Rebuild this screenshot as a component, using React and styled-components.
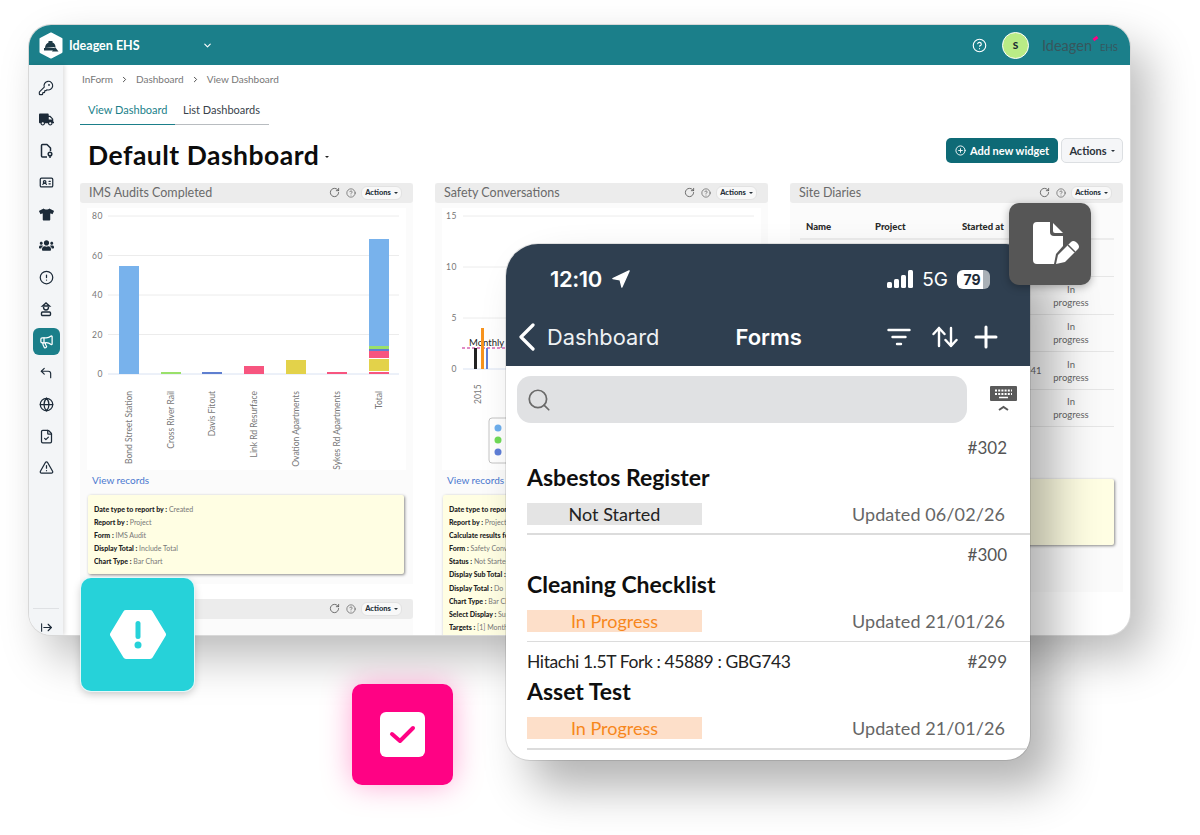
import React from 'react';
import styled, { createGlobalStyle } from 'styled-components';
import { KeyRound, IdCard, CircleAlert, Megaphone, CornerUpLeft, Globe, FileCheck, TriangleAlert, ArrowRightFromLine, RotateCw, CircleHelp, CirclePlus, ChevronDown, Search, ChevronRight } from 'lucide-react';
import { FaTruck, FaTshirt, FaUsers } from 'react-icons/fa';

const uiFont = `"Lato", "Noto Sans", sans-serif`;

const GlobalStyle = createGlobalStyle`
  html, body { margin: 0; padding: 0; background: #fff; }
  body { font-family: ${uiFont}; }
`;

const Page = styled.div`
  position: relative;
  width: 1200px;
  height: 835px;
  overflow: hidden;
  background: #fff;
  padding: 25px 0 0 29px;
  box-sizing: border-box;
`;

const Window = styled.div`
  width: 1101px;
  height: 610px;
  border-radius: 22px;
  background: #fff;
  box-shadow: 0 0 0 1px #d8d8d8, 18px 22px 46px rgba(0, 0, 0, 0.27);
  overflow: hidden;
  display: flex;
  flex-direction: column;
`;

const TopBar = styled.div`
  height: 40px;
  flex: none;
  background: #1b7f8a;
  display: flex;
  align-items: center;
  padding: 0 14px 0 10px;
  color: #fff;
`;

const Brand = styled.span`
  font-size: 12.5px;
  font-weight: 700;
  margin-left: 6px;
  width: 133px;
`;

const TopRight = styled.div`
  margin-left: auto;
  display: flex;
  align-items: center;
`;

const Avatar = styled.div`
  width: 25px;
  height: 25px;
  border-radius: 50%;
  background: #b9ec86;
  border: 1px solid #fff;
  margin: 0 13px 0 15px;
  color: #1b2b33;
  font-size: 10px;
  font-weight: 900;
  display: flex;
  align-items: center;
  justify-content: center;
`;

const VendorMark = styled.span`
  position: relative;
  color: #37565c;
  font-size: 14.5px;
  width: 74px;
  white-space: nowrap;
  small {
    font-size: 9.5px;
    margin-left: 8px;
  }
  i {
    position: absolute;
    left: 51px;
    top: 0;
    width: 5px;
    height: 3px;
    background: #ff0284;
    transform: rotate(-35deg);
  }
`;

const Body = styled.div`
  flex: 1;
  min-height: 0;
  display: flex;
`;

const Sidebar = styled.div`
  width: 34px;
  flex: none;
  background: #f3f5f7;
  box-shadow: 2px 0 4px rgba(0, 0, 0, 0.12);
  display: flex;
  flex-direction: column;
  align-items: center;
  padding-top: 9px;
  box-sizing: border-box;
  z-index: 1;
`;

const NavItem = styled.div`
  width: 27px;
  height: 27px;
  margin-bottom: 4.7px;
  flex: none;
  display: flex;
  align-items: center;
  justify-content: center;
  border-radius: 6px;
  color: ${(p) => (p.$active ? '#fff' : '#1c2a38')};
  background: ${(p) => (p.$active ? '#1b7f8a' : 'transparent')};
`;

const SideFoot = styled.div`
  margin-top: auto;
  width: 26px;
  height: 27px;
  box-sizing: border-box;
  padding-top: 12px;
  border-top: 1px solid #dfe1e4;
  display: flex;
  align-items: flex-start;
  justify-content: center;
  color: #1c2a38;
`;

const Main = styled.div`
  flex: 1;
  min-width: 0;
  padding: 7px 7px 0 17px;
  overflow: hidden;
`;

const Crumbs = styled.div`
  height: 14px;
  display: flex;
  align-items: center;
  font-size: 10px;
  color: #777;
  padding-left: 2px;
  svg {
    margin: 0 7px;
    color: #444;
  }
`;

const Tabs = styled.div`
  margin-top: 14px;
  height: 24px;
  width: 189px;
  display: flex;
  border-bottom: 1px solid #b8bcc0;
`;

const Tab = styled.div`
  font-size: 11px;
  padding: 3px 8px 0;
  width: ${(p) => (p.$active ? '95px' : 'auto')};
  box-sizing: border-box;
  white-space: nowrap;
  color: ${(p) => (p.$active ? '#1b7f8a' : '#39424b')};
  ${(p) => p.$active && 'border-bottom: 1px solid #1b7f8a; margin-bottom: -1px;'}
`;

const HeadRow = styled.div`
  margin-top: 7px;
  height: 51px;
  display: flex;
  align-items: flex-start;
`;

const Title = styled.h1`
  margin: 8px 0 0 8px;
  font-size: 26.5px;
  line-height: 30px;
  font-weight: 700;
  color: #0c0c0c;
  letter-spacing: 0.5px;
`;

const TitleCaret = styled.span`
  width: 0;
  height: 0;
  margin: 24px 0 0 6px;
  border: 2.5px solid transparent;
  border-top-color: #222;
`;

const PrimaryButton = styled.div`
  margin: 6px 0 0 auto;
  width: 112px;
  height: 25px;
  border-radius: 5px;
  background: #0e6a76;
  color: #fff;
  font-size: 11px;
  font-weight: 700;
  display: flex;
  align-items: center;
  justify-content: center;
  gap: 4px;
`;

const GhostButton = styled.div`
  margin: 6px 0 0 3px;
  width: 62px;
  height: 25px;
  box-sizing: border-box;
  border-radius: 5px;
  background: #f5f6f8;
  border: 1px solid #dcdfe2;
  color: #2b333b;
  font-size: 11px;
  font-weight: 700;
  display: flex;
  align-items: center;
  justify-content: center;
  gap: 4px;
`;

const Caret = styled.span`
  width: 0;
  height: 0;
  margin-top: 3px;
  border: 2.5px solid transparent;
  border-top-color: currentColor;
`;

const Columns = styled.div`
  display: grid;
  grid-template-columns: repeat(3, 333px);
  column-gap: 22px;
  align-items: start;
`;

const Column = styled.div`
  display: flex;
  flex-direction: column;
  gap: 15px;
`;

const Widget = styled.div`
  background: #fbfbfb;
`;

const WidgetHead = styled.div`
  height: 20px;
  box-sizing: border-box;
  background: #ececec;
  border-radius: 3px;
  display: flex;
  align-items: center;
  padding: 0 11px 1px 9px;
  font-size: 12.5px;
  color: #6a6a6a;
  svg {
    color: #555;
  }
`;

const WidgetTools = styled.div`
  margin-left: auto;
  display: flex;
  align-items: center;
  gap: 6px;
`;

const MiniActions = styled.div`
  height: 14px;
  width: 41px;
  box-sizing: border-box;
  margin-left: -1px;
  border-radius: 6px;
  border: 1px solid #e2e2e2;
  background: #f8f8f8;
  color: #263038;
  font-size: 7.5px;
  font-weight: 900;
  display: flex;
  align-items: center;
  justify-content: center;
  gap: 3px;
`;

const ChartPanel = styled.div`
  margin: 5px 7px 0;
  height: 262px;
  background: #fff;
  svg {
    display: block;
    font-family: ${uiFont};
  }
`;

const RecordsLink = styled.div`
  margin: 3px 0 0 12px;
  height: 14px;
  font-size: 10px;
  line-height: 14px;
  color: #4a78d0;
`;

const Note = styled.div`
  margin: ${(p) => p.$top || '8px'} 9px 0 8px;
  height: ${(p) => p.$height || 'auto'};
  padding: 8px 0 6px 6px;
  box-sizing: border-box;
  background: #fffee3;
  border-radius: 2px;
  box-shadow: 1px 1px 3px rgba(0, 0, 0, 0.45);
`;

const NoteRow = styled.div`
  font-size: 7px;
  height: 13.1px;
  line-height: 13.1px;
  color: #777;
  white-space: nowrap;
  overflow: hidden;
  b {
    color: #222;
    font-weight: 900;
  }
`;

const WidgetFoot = styled.div`
  height: ${(p) => p.$height};
`;

const DiaryHead = styled.div`
  margin: 5px 9px 0 10px;
  height: 32px;
  display: grid;
  grid-template-columns: 69px 87px 1fr;
  align-items: center;
  padding: 7px 0 0 6px;
  box-sizing: border-box;
  border-bottom: 2px solid #ececec;
  font-size: 9.5px;
  font-weight: 900;
  color: #2a2a2a;
`;

const DiaryRow = styled.div`
  margin: 0 9px 0 10px;
  height: 37.4px;
  box-sizing: border-box;
  background: #fafafa;
  border-bottom: 1px solid #e6e6e6;
  display: grid;
  grid-template-columns: 69px 87px 91px 1fr;
  align-items: center;
  padding-left: 6px;
  font-size: 9.5px;
  color: #666;
`;

const DiaryStatus = styled.div`
  width: 40px;
  margin: 1px 0 0 -2px;
  text-align: center;
  line-height: 13px;
`;

const Tile = styled.div`
  position: absolute;
  left: ${(p) => p.$x}px;
  top: ${(p) => p.$y}px;
  width: ${(p) => p.$size}px;
  height: ${(p) => p.$size}px;
  box-sizing: border-box;
  border-radius: 10px;
  background: ${(p) => p.$bg};
  box-shadow: ${(p) => p.$shadow};
  display: flex;
  align-items: center;
  justify-content: center;
  z-index: 5;
`;

const Phone = styled.div`
  position: absolute;
  left: 506px;
  top: 244px;
  width: 524px;
  height: 516px;
  background: #fff;
  border-radius: 32px 24px 24px 24px;
  overflow: hidden;
  box-shadow: 0 0 0 1px rgba(0, 0, 0, 0.1), 24px 28px 46px rgba(0, 0, 0, 0.3);
  z-index: 3;
  display: flex;
  flex-direction: column;
`;

const PhoneHeader = styled.div`
  height: 122px;
  flex: none;
  background: #2f3f50;
  color: #fff;
  font-family: "Inter", "Liberation Sans", sans-serif;
`;

const StatusBar = styled.div`
  height: 70px;
  box-sizing: border-box;
  padding: 0 40px 0 44px;
  display: flex;
  align-items: center;
`;

const Clock = styled.span`
  font-size: 22px;
  font-weight: 600;
  letter-spacing: -0.4px;
  margin-right: 10px;
`;

const Network = styled.span`
  font-size: 19px;
  font-weight: 400;
  margin: 0 9px 0 8px;
`;

const Battery = styled.span`
  width: 33px;
  height: 19px;
  border-radius: 6px;
  background: linear-gradient(90deg, #fff 0 80%, #a9b0b6 80%);
  color: #1e2b38;
  font-size: 14px;
  font-weight: 700;
  display: flex;
  align-items: center;
  justify-content: center;
  padding-right: 3px;
  box-sizing: border-box;
`;

const NavBar = styled.div`
  position: relative;
  height: 46px;
  display: flex;
  align-items: center;
  padding: 0 32px 0 12px;
  font-size: 21.8px;
`;

const BackLabel = styled.span`
  margin-left: 11px;
  font-weight: 400;
  color: #eef1f3;
`;

const NavTitle = styled.span`
  margin-left: 76px;
  font-size: 22px;
  font-weight: 600;
`;

const NavIcons = styled.div`
  margin-left: auto;
  display: flex;
  align-items: center;
  gap: 16px;
  > svg:first-child {
    margin-right: 5px;
  }
`;

const SearchRow = styled.div`
  flex: none;
  display: flex;
  align-items: flex-start;
  padding: 10px 12px 0 11px;
  height: 68px;
  box-sizing: border-box;
`;

const SearchBox = styled.div`
  width: 450px;
  height: 47px;
  border-radius: 14px;
  background: #e0e1e3;
  display: flex;
  align-items: center;
  padding-left: 9px;
  box-sizing: border-box;
  color: #6a6a6a;
`;

const KeyboardButton = styled.div`
  margin: 10px 0 0 23px;
`;

const FormRow = styled.div`
  margin: 0 0 6px 21px;
  height: 101.2px;
  box-sizing: border-box;
  border-bottom: ${(p) => (p.$thick ? '2px' : '1px')} solid #dcdcdc;
  padding-right: 23px;
`;

const RowTop = styled.div`
  height: 26px;
  display: flex;
  align-items: center;
  justify-content: space-between;
  font-size: 17.5px;
  letter-spacing: -0.4px;
  color: #222;
`;

const RowNumber = styled.span`
  font-size: 17px;
  letter-spacing: 0;
  color: #555;
`;

const RowName = styled.div`
  height: 34px;
  line-height: 34px;
  font-size: 23px;
  font-weight: 700;
  color: #0f0f0f;
`;

const RowBottom = styled.div`
  margin-top: 9px;
  display: flex;
  align-items: center;
  justify-content: space-between;
`;

const StatusBadge = styled.div`
  width: 175px;
  height: 22px;
  background: ${(p) => (p.$tone === 'orange' ? '#fddfc9' : '#e4e4e4')};
  color: ${(p) => (p.$tone === 'orange' ? '#f7871c' : '#222')};
  font-size: 18px;
  line-height: 22px;
  text-align: center;
`;

const Updated = styled.span`
  font-size: 18px;
  margin-right: 2px;
  letter-spacing: 0.1px;
  color: #666;
`;

const sideIcons = [
  <KeyRound size={16} strokeWidth={1.7} />,
  <FaTruck size={15} />,
  <DocPin />,
  <IdCard size={15} strokeWidth={2} />,
  <FaTshirt size={15} />,
  <FaUsers size={15} />,
  <CircleAlert size={15} strokeWidth={2} />,
  <HatPerson />,
  <Megaphone size={15} strokeWidth={2} />,
  <CornerUpLeft size={14} strokeWidth={2} />,
  <Globe size={15} strokeWidth={2} />,
  <FileCheck size={15} strokeWidth={2} />,
  <TriangleAlert size={15} strokeWidth={2} />,
];

function DocPin() {
  return (
    <svg width="16" height="16" viewBox="0 0 16 16" fill="none" stroke="currentColor" strokeWidth="1.5" strokeLinejoin="round">
      <path d="M9 14H4.5a1 1 0 0 1-1-1V2.5a1 1 0 0 1 1-1H9L12.5 5v3" />
      <circle cx="12" cy="11" r="1.8" />
      <path d="M12 13v2" />
    </svg>
  );
}

function HatPerson() {
  return (
    <svg width="16" height="16" viewBox="0 0 16 16" fill="none" stroke="currentColor" strokeWidth="1.4">
      <path d="M4.5 5L8 2l3.5 3z" />
      <path d="M5.5 6c0 4 5 4 5 0" />
      <rect x="3.5" y="11" width="9" height="3.5" rx="1" />
    </svg>
  );
}

function LogoHex() {
  return (
    <svg width="24" height="27" viewBox="0 0 24 27">
      <polygon points="12,1.5 22.5,7 22.5,20 12,25.5 1.5,20 1.5,7" fill="#fff" stroke="#fff" strokeWidth="2" strokeLinejoin="round" />
      <path d="M6 16c0-3 2-5 3.500-5.500V9h4v1.500c1.500.5 3 2 3 4.500z" fill="#1f3a46" />
      <rect x="5" y="16" width="10" height="2.500" fill="#1f3a46" />
      <polygon points="16,15 19.500,19.500 13,19.500" fill="#1f3a46" />
    </svg>
  );
}

function WidgetTitleBar({ title }) {
  return (
    <WidgetHead>
      {title}
      <WidgetTools>
        <RotateCw size={11} strokeWidth={1.8} />
        <CircleHelp size={10} strokeWidth={1.6} />
        <MiniActions>Actions<Caret /></MiniActions>
      </WidgetTools>
    </WidgetHead>
  );
}

const auditBars = [
  { name: 'Bond Street Station', x: 119, parts: [[266, 374, '#78b2ec']] },
  { name: 'Cross River Rail', x: 161, parts: [[372, 374, '#9ae06a']] },
  { name: 'Davis Fitout', x: 202, parts: [[372, 374, '#5f7fd0']] },
  { name: 'Link Rd Resurface', x: 244, parts: [[366, 374, '#f7557f']] },
  { name: 'Ovation Apartments', x: 286, parts: [[360, 374, '#e3d24a']] },
  { name: 'Sykes Rd Apartments', x: 327, parts: [[372, 374, '#f7557f']] },
  {
    name: 'Total',
    x: 369,
    parts: [
      [239, 346, '#78b2ec'],
      [346, 349, '#9ae06a'],
      [349, 351, '#5f7fd0'],
      [351, 358, '#f7557f'],
      [359, 371, '#e3d24a'],
      [372, 374, '#f7557f'],
    ],
  },
];

function Grid({ ticks, from, to, labelX }) {
  return ticks.map(([label, y]) => (
    <g key={label}>
      <line x1={from} x2={to} y1={y} y2={y} stroke={label === '0' ? '#d9e2f2' : '#ececec'} />
      <text x={labelX} y={y + 3} fontSize="8.5" fill="#777" textAnchor="end" letterSpacing="0.6">{label}</text>
    </g>
  ));
}

function AuditChart() {
  return (
    <svg width="319" height="262" viewBox="87 208 319 262">
      <Grid ticks={[['80', 216], ['60', 255.5], ['40', 295], ['20', 334.5], ['0', 374]]} from={108} to={399} labelX={103} />
      {auditBars.map((bar) => (
        <g key={bar.name}>
          {bar.parts.map(([top, bottom, fill]) => (
            <rect key={top} x={bar.x} y={top} width="20" height={bottom - top} fill={fill} />
          ))}
          <text
            transform={`rotate(-90 ${bar.x + 13} 391)`}
            x={bar.x + 13}
            y={391}
            fontSize="8.5"
            fill="#777"
            textAnchor="end"
          >
            {bar.name}
          </text>
        </g>
      ))}
    </svg>
  );
}

function SafetyChart() {
  return (
    <svg width="319" height="262" viewBox="442 208 319 262">
      <Grid ticks={[['15', 216], ['10', 267], ['5', 318], ['0', 369]]} from={463} to={754} labelX={457} />
      <text x={469} y={346} fontSize="9.5" fill="#222">Monthly</text>
      <line x1={462} x2={506} y1={348} y2={348} stroke="#c2188b" strokeDasharray="3 2" />
      <rect x={474} y={348} width="3" height="21" fill="#222" />
      <rect x={481} y={328} width="3" height="41" fill="#f7931e" />
      <rect x={486} y={348} width="2" height="21" fill="#5f7fd8" />
      <text transform="rotate(-90 481 404)" x={481} y={404} fontSize="8.5" fill="#777">2015</text>
      <rect x={489} y={418} width="40" height="45" rx="3" fill="#fff" stroke="#c4c4c4" />
      <circle cx={498} cy={428} r="3.5" fill="#6fb0ee" />
      <circle cx={498} cy={440} r="3.5" fill="#71dc58" />
      <circle cx={498} cy={452} r="3.5" fill="#5f7fd8" />
    </svg>
  );
}

const auditNotes = [
  ['Date type to report by :', 'Created'],
  ['Report by :', 'Project'],
  ['Form :', 'IMS Audit'],
  ['Display Total :', 'Include Total'],
  ['Chart Type :', 'Bar Chart'],
];

const safetyNotes = [
  ['Date type to report by :', 'Created'],
  ['Report by :', 'Project'],
  ['Calculate results for :', 'All'],
  ['Form :', 'Safety Conv'],
  ['Status :', 'Not Started'],
  ['Display Sub Total :', 'Do'],
  ['Display Total :', 'Do'],
  ['Chart Type :', 'Bar Chart'],
  ['Select Display :', 'Sum'],
  ['Targets :', '[1] Monthly'],
];

function NoteList({ rows }) {
  return rows.map(([label, value]) => (
    <NoteRow key={label}><b>{label}</b> {value}</NoteRow>
  ));
}

const diaries = ['', '', '', '19/01/2026 14:41', ''];

const forms = [
  { id: '#302', name: 'Asbestos Register', status: 'Not Started', updated: 'Updated 06/02/26', thick: true },
  { id: '#300', name: 'Cleaning Checklist', status: 'In Progress', tone: 'orange', updated: 'Updated 21/01/26' },
  { id: '#299', asset: 'Hitachi 1.5T Fork : 45889 : GBG743', name: 'Asset Test', status: 'In Progress', tone: 'orange', updated: 'Updated 21/01/26', thick: true },
];

function FilterGlyph() {
  return (
    <svg width="24" height="18" viewBox="0 0 24 18" stroke="#fff" strokeWidth="2.4" strokeLinecap="round">
      <path d="M1.500 2h21M5.500 9h13M10 16h4" />
    </svg>
  );
}

function SortGlyph() {
  return (
    <svg width="26" height="22" viewBox="0 0 26 22" fill="none" stroke="#fff" strokeWidth="2.4" strokeLinecap="round" strokeLinejoin="round">
      <path d="M7 20V2M1.500 8L7 2l5.500 6" />
      <path d="M19 2v18M13.500 14l5.500 6 5.500-6" />
    </svg>
  );
}

function PlusGlyph() {
  return (
    <svg width="24" height="24" viewBox="0 0 24 24" stroke="#fff" strokeWidth="3" strokeLinecap="round">
      <path d="M12 2v20M2 12h20" />
    </svg>
  );
}

function SignalGlyph() {
  return (
    <svg width="27" height="18" viewBox="0 0 27 18" fill="#fff">
      <rect x="0" y="12" width="5" height="6" rx="1.500" />
      <rect x="7" y="9" width="5" height="9" rx="1.500" />
      <rect x="14" y="5" width="5" height="13" rx="1.500" />
      <rect x="21" y="0" width="5" height="18" rx="1.500" />
    </svg>
  );
}

function LocationGlyph() {
  return (
    <svg width="18" height="18" viewBox="0 0 20 20" fill="#fff">
      <path d="M19 1L1 9.500l8 1.500 2 8z" stroke="#fff" strokeWidth="1.500" strokeLinejoin="round" />
    </svg>
  );
}

function BackGlyph() {
  return (
    <svg width="18" height="28" viewBox="0 0 18 28" fill="none" stroke="#fff" strokeWidth="3.200" strokeLinecap="round" strokeLinejoin="round">
      <path d="M15 2L3 14l12 12" />
    </svg>
  );
}

function KeyboardGlyph() {
  return (
    <svg width="27" height="26" viewBox="0 0 27 26">
      <rect x="0" y="0" width="27" height="15" rx="1" fill="#5a5a5a" />
      <path d="M5 4.500h17M5 8h17" stroke="#fff" strokeWidth="2" strokeDasharray="2 1.200" />
      <path d="M9 11.500h9" stroke="#fff" strokeWidth="1.500" />
      <path d="M9 24l4.500-3 4.500 3" fill="none" stroke="#5a5a5a" strokeWidth="2" />
    </svg>
  );
}

function HexAlert() {
  return (
    <svg width="56" height="51" viewBox="0 0 56 51">
      <polygon points="16,4 40,4 53,25.500 40,47 16,47 3,25.500" fill="#fff" stroke="#fff" strokeWidth="6" strokeLinejoin="round" />
      <rect x="25.500" y="12" width="5" height="18" rx="2.500" fill="#26d2d9" />
      <circle cx="28" cy="36" r="3.500" fill="#26d2d9" />
    </svg>
  );
}

function CheckSquare() {
  return (
    <svg width="45" height="45" viewBox="0 0 45 45">
      <rect width="45" height="45" rx="6" fill="#fff" />
      <path d="M12 22l8 7 13-13" fill="none" stroke="#ff0284" strokeWidth="4" strokeLinecap="round" strokeLinejoin="round" />
    </svg>
  );
}

function DocPencil() {
  return (
    <svg width="60" height="60" viewBox="0 0 60 60" fill="#fff">
      <path d="M17 8H30V18Q30 22 34 22H43V32L36 40L34 50H17Q13 50 13 46V12Q13 8 17 8Z" />
      <path d="M33 9L43 19H35Q33 19 33 17Z" />
      <path d="M36 50L38 41L51 28Q53 26 56 28L58 30Q60 33 58 35L45 48Z" />
      <path d="M48 31L55 38" stroke="#565656" strokeWidth="1.500" />
    </svg>
  );
}

export default function App() {
  return (
    <Page>
      <GlobalStyle />
      <Window>
        <TopBar>
          <LogoHex />
          <Brand>Ideagen EHS</Brand>
          <ChevronDown size={11} strokeWidth={2.500} />
          <TopRight>
            <CircleHelp size={15} strokeWidth={1.800} />
            <Avatar>S</Avatar>
            <VendorMark>Ideagen<i /><small>EHS</small></VendorMark>
          </TopRight>
        </TopBar>
        <Body>
          <Sidebar>
            {sideIcons.map((icon, i) => (
              <NavItem key={i} $active={i === 8}>{icon}</NavItem>
            ))}
            <SideFoot><ArrowRightFromLine size={13} strokeWidth={2} /></SideFoot>
          </Sidebar>
          <Main>
            <Crumbs>
              InForm<ChevronRight size={9} strokeWidth={2.500} />Dashboard<ChevronRight size={9} strokeWidth={2.500} />View Dashboard
            </Crumbs>
            <Tabs>
              <Tab $active>View Dashboard</Tab>
              <Tab>List Dashboards</Tab>
            </Tabs>
            <HeadRow>
              <Title>Default Dashboard</Title>
              <TitleCaret />
              <PrimaryButton><CirclePlus size={11} strokeWidth={2} />Add new widget</PrimaryButton>
              <GhostButton>Actions<Caret /></GhostButton>
            </HeadRow>
            <Columns>
              <Column>
                <Widget>
                  <WidgetTitleBar title="IMS Audits Completed" />
                  <ChartPanel><AuditChart /></ChartPanel>
                  <RecordsLink>View records</RecordsLink>
                  <Note><NoteList rows={auditNotes} /></Note>
                  <WidgetFoot $height="10px" />
                </Widget>
                <Widget>
                  <WidgetTitleBar title="" />
                  <WidgetFoot $height="30px" />
                </Widget>
              </Column>
              <Column>
                <Widget>
                  <WidgetTitleBar title="Safety Conversations" />
                  <ChartPanel><SafetyChart /></ChartPanel>
                  <RecordsLink>View records</RecordsLink>
                  <Note><NoteList rows={safetyNotes} /></Note>
                </Widget>
              </Column>
              <Column>
                <Widget>
                  <WidgetTitleBar title="Site Diaries" />
                  <DiaryHead>
                    <span>Name</span>
                    <span>Project</span>
                    <span>Started at</span>
                  </DiaryHead>
                  {diaries.map((started, i) => (
                    <DiaryRow key={i}>
                      <span />
                      <span />
                      <span>{started}</span>
                      <DiaryStatus>In progress</DiaryStatus>
                    </DiaryRow>
                  ))}
                  <Note $top="52px" $height="66px" />
                  <WidgetFoot $height="47px" />
                </Widget>
              </Column>
            </Columns>
          </Main>
        </Body>
      </Window>

      <Tile $x={81} $y={578} $size={113} $bg="#26d2d9" $shadow="0 0 0 1px #e6f7f8, 0 3px 8px rgba(0,0,0,.22)">
        <HexAlert />
      </Tile>
      <Tile $x={352} $y={684} $size={101} $bg="#ff0284" $shadow="0 0 30px rgba(255,2,132,.35)">
        <CheckSquare />
      </Tile>
      <Tile $x={1009} $y={203} $size={82} $bg="#565656" $shadow="0 2px 8px rgba(0,0,0,.3)">
        <DocPencil />
      </Tile>

      <Phone>
        <PhoneHeader>
          <StatusBar>
            <Clock>12:10</Clock>
            <LocationGlyph />
            <TopRight>
              <SignalGlyph />
              <Network>5G</Network>
              <Battery>79</Battery>
            </TopRight>
          </StatusBar>
          <NavBar>
            <BackGlyph />
            <BackLabel>Dashboard</BackLabel>
            <NavTitle>Forms</NavTitle>
            <NavIcons>
              <FilterGlyph />
              <SortGlyph />
              <PlusGlyph />
            </NavIcons>
          </NavBar>
        </PhoneHeader>
        <SearchRow>
          <SearchBox><Search size={26} strokeWidth={1.600} /></SearchBox>
          <KeyboardButton><KeyboardGlyph /></KeyboardButton>
        </SearchRow>
        {forms.map((form) => (
          <FormRow key={form.id} $thick={form.thick}>
            <RowTop>
              <span>{form.asset}</span>
              <RowNumber>{form.id}</RowNumber>
            </RowTop>
            <RowName>{form.name}</RowName>
            <RowBottom>
              <StatusBadge $tone={form.tone}>{form.status}</StatusBadge>
              <Updated>{form.updated}</Updated>
            </RowBottom>
          </FormRow>
        ))}
      </Phone>
    </Page>
  );
}
